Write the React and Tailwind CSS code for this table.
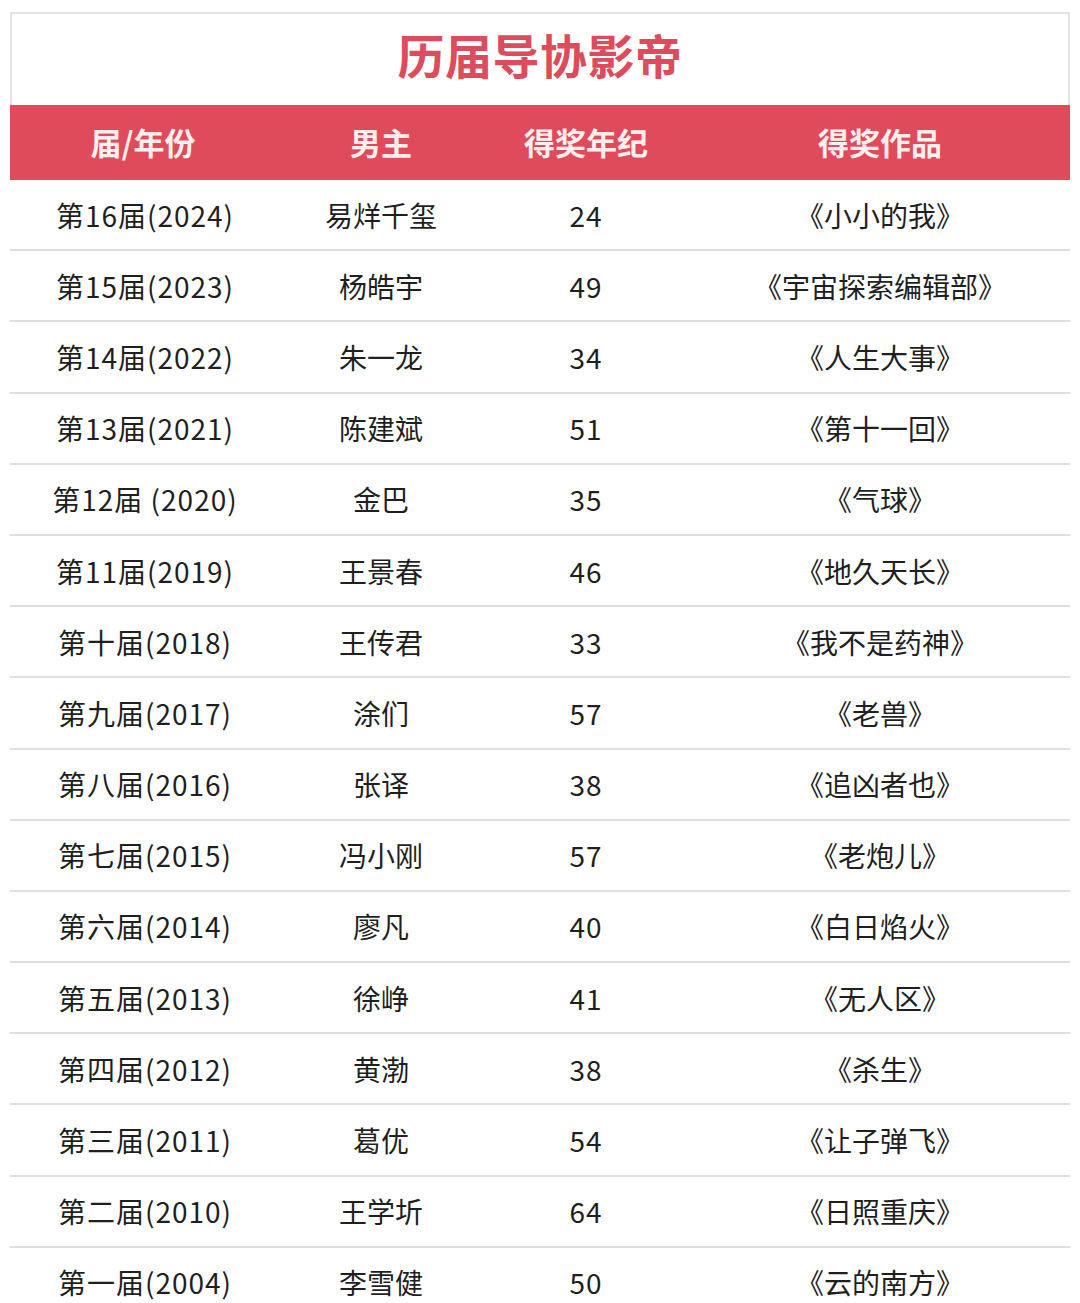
const rows = [
  ["第16届(2024)", "易烊千玺", "24", "《小小的我》"],
  ["第15届(2023)", "杨皓宇", "49", "《宇宙探索编辑部》"],
  ["第14届(2022)", "朱一龙", "34", "《人生大事》"],
  ["第13届(2021)", "陈建斌", "51", "《第十一回》"],
  ["第12届 (2020)", "金巴", "35", "《气球》"],
  ["第11届(2019)", "王景春", "46", "《地久天长》"],
  ["第十届(2018)", "王传君", "33", "《我不是药神》"],
  ["第九届(2017)", "涂们", "57", "《老兽》"],
  ["第八届(2016)", "张译", "38", "《追凶者也》"],
  ["第七届(2015)", "冯小刚", "57", "《老炮儿》"],
  ["第六届(2014)", "廖凡", "40", "《白日焰火》"],
  ["第五届(2013)", "徐峥", "41", "《无人区》"],
  ["第四届(2012)", "黄渤", "38", "《杀生》"],
  ["第三届(2011)", "葛优", "54", "《让子弹飞》"],
  ["第二届(2010)", "王学圻", "64", "《日照重庆》"],
  ["第一届(2004)", "李雪健", "50", "《云的南方》"],
];

const cols = "grid grid-cols-[270px_202px_208px_380px]";

export default function App() {
  return (
    <div className="w-[1080px] h-[1303px] overflow-hidden bg-white pt-[12px] font-['Noto_Sans_CJK_SC','Noto_Sans',sans-serif]">
      <div className="mx-[10px] w-[1060px]">
        <div className="h-[93px] pb-[12px] border-x-2 border-t-2 border-[#e3e3e3] flex items-center justify-center">
          <h1 className="text-[47px] font-bold text-[#dc4c5c] tracking-[0.5px] leading-none">历届导协影帝</h1>
        </div>
        <div className={`${cols} h-[75px] bg-[#e04b5b] items-center text-[31px] font-bold text-[#fdeeee]`}>
          <div className="text-center pr-[4px]">届/年份</div>
          <div className="text-center">男主</div>
          <div className="text-center">得奖年纪</div>
          <div className="text-center">得奖作品</div>
        </div>
        {rows.map((r, i) => (
          <div
            key={i}
            className={`${cols} h-[71.2px] items-center border-b-2 border-[#e2dcdc] text-[28px] text-[#1f1f1f] leading-none`}
          >
            <div className="text-center tracking-[1px]">{r[0]}</div>
            <div className="text-center">{r[1]}</div>
            <div className="text-center tracking-[1px]">{r[2]}</div>
            <div className="text-center">{r[3]}</div>
          </div>
        ))}
      </div>
    </div>
  );
}
